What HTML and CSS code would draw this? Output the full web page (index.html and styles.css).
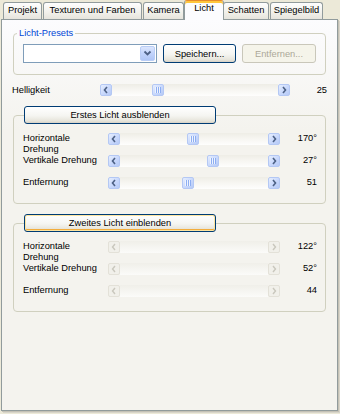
FILE: index.html
```html
<!DOCTYPE html>
<html lang="de">
<head>
  <meta charset="UTF-8" />
  <title>Licht</title>
  <link rel="stylesheet" href="styles.css">
</head>
<body>
  <div class="tabs">
    <div class="tab tab-projekt">Projekt</div>
    <div class="tab tab-texturen">Texturen und Farben</div>
    <div class="tab tab-kamera">Kamera</div>
    <div class="tab tab-licht active">Licht</div>
    <div class="tab tab-schatten">Schatten</div>
    <div class="tab tab-spiegel">Spiegelbild</div>
  </div>

  <div class="panel">
    <!-- Presets -->
    <fieldset class="group group-presets">
      <legend class="group-title">Licht-Presets</legend>
      <div class="preset-row">
        <div class="combo">
          <span class="combo-btn">
            <svg width="9" height="9" viewBox="0 0 9 9"><polyline points="1.5,2.5 4.5,5.5 7.5,2.5" fill="none" stroke="#4d6185" stroke-width="1.8"/></svg>
          </span>
        </div>
        <button class="btn btn-save">Speichern...</button>
        <button class="btn btn-remove" disabled>Entfernen...</button>
      </div>
    </fieldset>

    <div class="row row-main">
      <span class="row-label">Helligkeit</span>
      <div class="sb">
        <span class="sb-btn"><svg width="10" height="10" viewBox="0 0 10 10"><polyline points="6,2 3.5,5 6,8" fill="none" stroke="#4d6185" stroke-width="1.6"/></svg></span>
        <div class="sb-track"><span class="sb-thumb" style="margin-left: 24%"><i class="grip"></i></span></div>
        <span class="sb-btn"><svg width="10" height="10" viewBox="0 0 10 10"><polyline points="4,2 6.5,5 4,8" fill="none" stroke="#4d6185" stroke-width="1.6"/></svg></span>
      </div>
      <span class="row-value">25</span>
    </div>

    <!-- Erstes Licht -->
    <fieldset class="group group-light">
      <legend><button class="btn btn-toggle">Erstes Licht ausblenden</button></legend>

      <div class="row">
        <span class="row-label">Horizontale<br>Drehung</span>
        <div class="sb">
          <span class="sb-btn"><svg width="10" height="10" viewBox="0 0 10 10"><polyline points="6,2 3.5,5 6,8" fill="none" stroke="#4d6185" stroke-width="1.6"/></svg></span>
          <div class="sb-track"><span class="sb-thumb" style="margin-left: 45%"><i class="grip"></i></span></div>
          <span class="sb-btn"><svg width="10" height="10" viewBox="0 0 10 10"><polyline points="4,2 6.5,5 4,8" fill="none" stroke="#4d6185" stroke-width="1.6"/></svg></span>
        </div>
        <span class="row-value">170°</span>
      </div>

      <div class="row">
        <span class="row-label">Vertikale Drehung</span>
        <div class="sb">
          <span class="sb-btn"><svg width="10" height="10" viewBox="0 0 10 10"><polyline points="6,2 3.5,5 6,8" fill="none" stroke="#4d6185" stroke-width="1.6"/></svg></span>
          <div class="sb-track"><span class="sb-thumb" style="margin-left: 59%"><i class="grip"></i></span></div>
          <span class="sb-btn"><svg width="10" height="10" viewBox="0 0 10 10"><polyline points="4,2 6.5,5 4,8" fill="none" stroke="#4d6185" stroke-width="1.6"/></svg></span>
        </div>
        <span class="row-value">27°</span>
      </div>

      <div class="row">
        <span class="row-label">Entfernung</span>
        <div class="sb">
          <span class="sb-btn"><svg width="10" height="10" viewBox="0 0 10 10"><polyline points="6,2 3.5,5 6,8" fill="none" stroke="#4d6185" stroke-width="1.6"/></svg></span>
          <div class="sb-track"><span class="sb-thumb" style="margin-left: 42%"><i class="grip"></i></span></div>
          <span class="sb-btn"><svg width="10" height="10" viewBox="0 0 10 10"><polyline points="4,2 6.5,5 4,8" fill="none" stroke="#4d6185" stroke-width="1.6"/></svg></span>
        </div>
        <span class="row-value">51</span>
      </div>
    </fieldset>

    <!-- Zweites Licht (deaktiviert) -->
    <fieldset class="group group-light">
      <legend><button class="btn btn-toggle btn-hot">Zweites Licht einblenden</button></legend>

      <div class="row">
        <span class="row-label">Horizontale<br>Drehung</span>
        <div class="sb sb-off">
          <span class="sb-btn"><svg width="10" height="10" viewBox="0 0 10 10"><polyline points="6,2 3.5,5 6,8" fill="none" stroke="#c9c7bd" stroke-width="1.4"/></svg></span>
          <div class="sb-track"></div>
          <span class="sb-btn"><svg width="10" height="10" viewBox="0 0 10 10"><polyline points="4,2 6.5,5 4,8" fill="none" stroke="#c9c7bd" stroke-width="1.4"/></svg></span>
        </div>
        <span class="row-value">122°</span>
      </div>

      <div class="row">
        <span class="row-label">Vertikale Drehung</span>
        <div class="sb sb-off">
          <span class="sb-btn"><svg width="10" height="10" viewBox="0 0 10 10"><polyline points="6,2 3.5,5 6,8" fill="none" stroke="#c9c7bd" stroke-width="1.4"/></svg></span>
          <div class="sb-track"></div>
          <span class="sb-btn"><svg width="10" height="10" viewBox="0 0 10 10"><polyline points="4,2 6.5,5 4,8" fill="none" stroke="#c9c7bd" stroke-width="1.4"/></svg></span>
        </div>
        <span class="row-value">52°</span>
      </div>

      <div class="row">
        <span class="row-label">Entfernung</span>
        <div class="sb sb-off">
          <span class="sb-btn"><svg width="10" height="10" viewBox="0 0 10 10"><polyline points="6,2 3.5,5 6,8" fill="none" stroke="#c9c7bd" stroke-width="1.4"/></svg></span>
          <div class="sb-track"></div>
          <span class="sb-btn"><svg width="10" height="10" viewBox="0 0 10 10"><polyline points="4,2 6.5,5 4,8" fill="none" stroke="#c9c7bd" stroke-width="1.4"/></svg></span>
        </div>
        <span class="row-value">44</span>
      </div>
    </fieldset>
  </div>
</body>
</html>
```

FILE: styles.css
```css
/* Reset */
* {
  box-sizing: border-box;
  margin: 0;
  padding: 0;
}

body {
  background-color: #ece9d8;
  color: #000;
  font-family: 'Liberation Sans', Arial, sans-serif;
  font-size: 9.3px;
  width: 340px;
  height: 414px;
  overflow: hidden;
}

/* Reiter */
.tabs {
  display: flex;
  align-items: flex-end;
  height: 19px;
  padding-left: 3px;
}

.tab {
  height: 17px;
  line-height: 15px;
  text-align: center;
  white-space: nowrap;
  border: 1px solid #919b9c;
  border-bottom: none;
  border-radius: 3px 3px 0 0;
  background: linear-gradient(#fefefe, #f1f0ea 60%, #e6e4dc);
  margin-right: 1px;
}

.tab-projekt { width: 39px; }
.tab-texturen { width: 99px; }
.tab-kamera { width: 41px; }
.tab-licht { width: 40px; }
.tab-schatten { width: 46px; }
.tab-spiegel { width: 53px; }

.tab.active {
  position: relative;
  z-index: 1;
  height: 20px;
  margin-left: -1px;
  margin-right: -1px;
  margin-bottom: -1px;
  line-height: 14px;
  background: #fcfcfe;
  border-top: 1px solid #e68b2c;
  box-shadow: inset 0 2px 0 #ffc73c;
}

/* Seite */
.panel {
  height: 392px;
  margin: 0 2px 0 1px;
  padding: 0 10px 0 11px;
  border: 1px solid #919b9c;
  background: linear-gradient(#fcfcfe, #f4f3ee 110px);
  box-shadow: 1px 1px 0 #c4c1b5, 2px 2px 0 #d8d5ca;
}

/* Gruppen */
.group {
  border: 1px solid #d0d0bf;
  border-radius: 4px;
  padding: 5px 8px 11px 9px;
  margin-right: 1px;
  min-width: 0;
}

.group-presets {
  margin-top: 8px;
}

.group-title {
  color: #0046d5;
  line-height: 11px;
  padding: 0 2px;
  margin-left: -6px;
}

.group-light {
  margin-top: 10px;
  padding-top: 9px;
  padding-bottom: 14px;
}

.group-light legend {
  margin-left: 1px;
  line-height: 0;
}

.preset-row {
  display: flex;
  gap: 6px;
  height: 19px;
}

/* Kombinationsfeld */
.combo {
  width: 134px;
  height: 19px;
  border: 1px solid #7f9db9;
  background-color: #fff;
  display: flex;
  justify-content: flex-end;
  padding: 1px;
}

.combo-btn {
  width: 15px;
  height: 15px;
  display: flex;
  align-items: center;
  justify-content: center;
  border: 1px solid #b9cdf6;
  border-radius: 2px;
  background: linear-gradient(#dce6fd, #c1d3fb 50%, #b0c6f6);
}

/* Schaltflächen */
.btn {
  font: inherit;
  color: #000;
  height: 19px;
  border: 1px solid #003c74;
  border-radius: 3px;
  background: linear-gradient(#ffffff, #f5f5f1 55%, #e6e4da 88%, #d6d0c5);
  cursor: pointer;
}

.btn-save {
  width: 73px;
}

.btn-remove {
  width: 74px;
  color: #aca899;
  border-color: #c9c7ba;
  background: #f5f4ea;
  cursor: default;
}

.btn-toggle {
  width: 192px;
  height: 18px;
}

.btn-hot {
  box-shadow: inset 0 0 0 1px #fde4a0, inset 0 -2px 0 #f3ad3c, inset -1px 0 0 #f8c462;
}

/* Zeilen mit Schiebereglern */
.row {
  display: flex;
  height: 12px;
  margin-bottom: 10px;
}

.row:last-child {
  margin-bottom: 0;
}

.row-label {
  flex: none;
  width: 85px;
  line-height: 11px;
  white-space: nowrap;
}

.row-value {
  flex: none;
  width: 37px;
  text-align: right;
  line-height: 11px;
}

.row-main {
  margin: 9px 0 0 -1px;
}

.row-main .row-label {
  width: 88px;
  line-height: 12px;
}

.row-main .row-value {
  line-height: 12px;
}

.sb {
  flex: 1;
  display: flex;
  height: 12px;
}

.sb-btn,
.sb-thumb {
  flex: none;
  width: 12px;
  height: 12px;
  display: flex;
  align-items: center;
  justify-content: center;
  border: 1px solid #b4c8f4;
  border-radius: 2px;
  background: linear-gradient(135deg, #e6eefe, #c8d8fc 55%, #b6caf6);
}

.sb-track {
  flex: 1;
  display: flex;
  background: linear-gradient(#eeede6, #f7f6f2 50%, #fefefd);
}

.grip {
  width: 6px;
  height: 6px;
  background: repeating-linear-gradient(90deg, #eef3fe 0 1px, #8daef2 1px 2px);
}

.sb-off .sb-btn {
  border-color: #e3e1d8;
  background: #f1f0ea;
}

.sb-off .sb-track {
  background: linear-gradient(#f0efe9, #fbfbf9);
}
```
